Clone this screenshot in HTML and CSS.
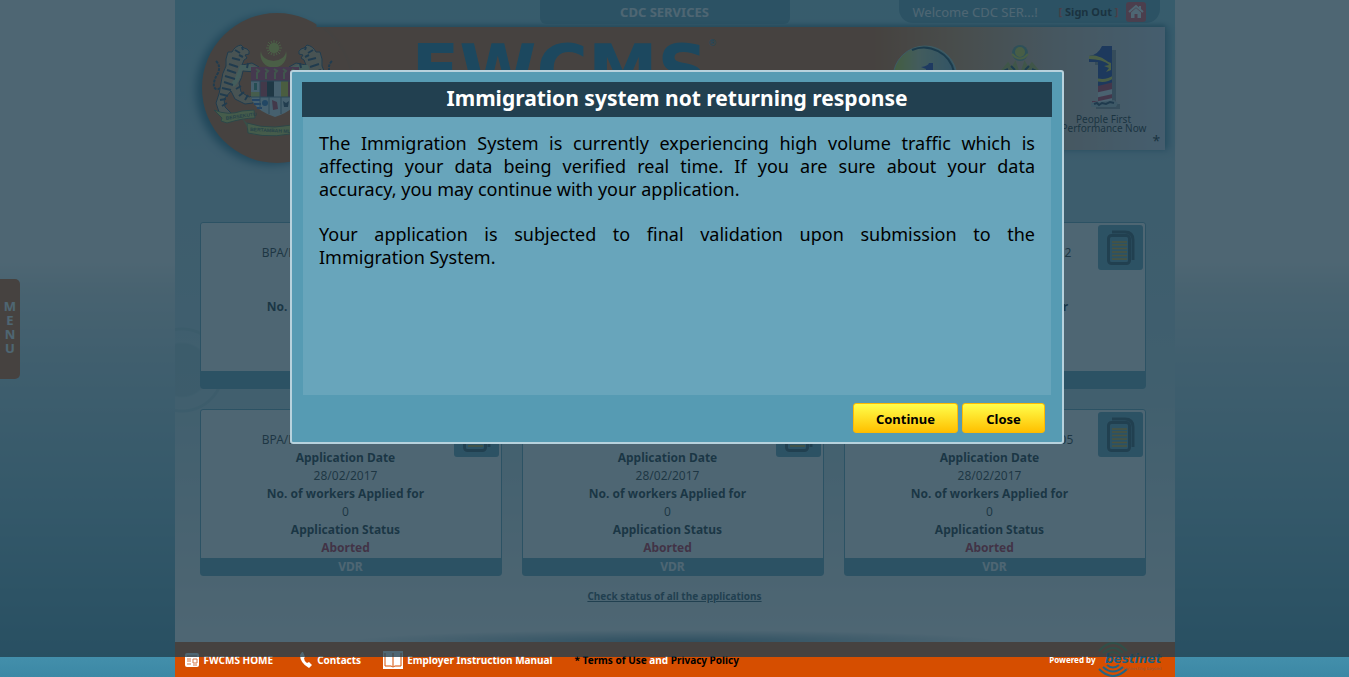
FILE: index.html
```
<!DOCTYPE html>
<html lang="en">
<head>
<meta charset="utf-8">
<title>FWCMS - CDC Services</title>
<link rel="stylesheet" href="styles.css">
</head>
<body>
<svg class="defs" width="0" height="0" aria-hidden="true">
  <defs>
    <symbol id="docs" viewBox="0 0 45 45">
      <path d="M14 7h13q8 0 8 8v20" fill="none" stroke="#224050" stroke-width="3"/>
      <rect x="10.500" y="10.500" width="21" height="28" rx="3" fill="none" stroke="#224050" stroke-width="3"/>
      <path d="M14 17h15M14 20h15M14 23.500h15M14 27h15M14 30.500h15M14 34h15" stroke="#e8a000" stroke-width="1.500"/>
    </symbol>
    <symbol id="tiger" viewBox="0 0 50 76">
      <path d="M5 17q5 5 2 12q-5 8-4 14q3 5 8-1" fill="none" stroke="#1c2b45" stroke-width="2" stroke-dasharray="3 1"/>
      <path d="M21 8q3-6 9-7l3 3 3 1q3 2 2 5l-4 1 2 3-3 2-2 5 10-2 7 4-4 5-12-1q-1 7-4 12l2 9 8 5 7-2-3 8-8 1-10-5-4-8-7 8 1 8 6 6-1 4-10-2-4-12q4-10 5-20t5-17q-1-7 2-14z" fill="#e0a060" stroke="#1c2b45"/>
      <path d="M29 21l10 0 6 2-3 4-11-1q-2 11-8 17l-3-3q6-8 9-19z" fill="#c9d08c"/>
      <path d="M21 14l8 2M18 20l9 3M16 26l9 3M14 32l10 3M13 38l9 3M11 44l9 2M9 50l8 2M9 56l6-1M11 62l5-3M37 19l-1 5M25 45l5-3M28 52l5-4M34 56l3-5M24 6l5 3M31 3l1 3M28 11l4 2" stroke="#1c2b45" stroke-width="2"/>
    </symbol>
  </defs>
</svg>

<div class="page">
  <div class="topbar">
    <div class="service-name">CDC SERVICES</div>
    <div class="account">
      <span class="welcome">Welcome CDC SER...!</span>
      <span class="signout"><i>[</i> <a href="#">Sign Out</a> <i>]</i></span>
      <a class="home" href="#" aria-label="Home">
        <svg viewBox="0 0 20 20" width="20" height="20"><path d="M3 10l7-6 7 6M14 4v4" fill="none" stroke="#fff" stroke-width="2"/><path d="M5 10.500l5-4.500 5 4.500V16h-3.500v-4h-3v4H5z" fill="#fff"/></svg>
      </a>
    </div>
  </div>

  <header class="banner">
    <div class="crest">
      <svg viewBox="0 0 150 150" width="150" height="150" aria-hidden="true">
        <use href="#tiger" x="9" y="31" width="50" height="76"/>
        <g transform="translate(144 0) scale(-1 1)"><use href="#tiger" x="9" y="31" width="50" height="76"/></g>
        <path d="M59 38a13 13 0 1 0 25 0a12.500 10 0 0 1-25 0z" fill="#e8d820"/>
        <circle cx="72" cy="35" r="5" fill="#e8d820"/>
        <path d="M72 27v16M64 35h16M66 29l12 12M78 29l-12 12M69 28l6 14M75 28l-6 14M65 32l14 6M65 38l14-6" stroke="#e8d820"/>
        <path d="M49 54h48v14H49z" fill="#d31f4b"/>
        <path d="M54 56l3 2-2 2v6M63 56l3 2-2 2v6M72 56l3 2-2 2v6M81 56l3 2-2 2v6M90 56l3 2-2 2v6" fill="none" stroke="#b8b040" stroke-width="2"/>
        <path d="M49 68h48v13q0 15-24 23-24-8-24-23z" fill="#d5e0e4"/>
        <path d="M58 68h7v16h-7z" fill="#c51f36"/><path d="M65 68h7v16h-7z" fill="#16191d"/><path d="M79 68h7v16h-7z" fill="#ecd300"/><path d="M86 68h4v16h-4z" fill="#c51f36"/>
        <path d="M49 79h9v5h-9z" fill="#d8cf40"/><path d="M52 70h3v7h-3z" fill="#358262"/>
        <path d="M50 87h8M52 91h7M55 95h5" stroke="#2a58ba" stroke-width="2"/>
        <path d="M49 68h48M49 84h48M58 68v27M67 84v17M79 84v17" stroke="#526779"/>
        <circle cx="63" cy="90" r="3" fill="#2564b2"/><path d="M70 87l5 2 1 7-5 1z" fill="#c51f36"/><path d="M81 88l3 2 3-2-1 6h-4z" fill="#27344c"/>
        <path d="M12 97q14 6 28 1l12-1 1 8q-12 0-28 5l-6-2 1-3z" fill="#d2cc38" stroke="#59632b"/>
        <path d="M45 110q27 9 58-2v9q-29 10-57 3z" fill="#d2cc38" stroke="#59632b"/>
        <path d="M40 105l6 6v5z" fill="#8d8a28"/>
        <text class="motto" x="24" y="107" transform="rotate(-8 24 107)">BERSEKUTU</text>
        <text class="motto" x="48" y="118" transform="rotate(3 48 118)">BERTAMBAH MUTU</text>
      </svg>
    </div>
    <div class="brand">FWCMS<sup>®</sup></div>
    <div class="partners">
      <svg class="onecall" viewBox="0 0 66 66" width="66" height="66" aria-hidden="true">
        <defs><linearGradient id="disc"><stop offset="0" stop-color="#c8d600"/><stop offset=".4" stop-color="#c5cc90"/><stop offset="1" stop-color="#6fa4c0"/></linearGradient></defs>
        <circle cx="33" cy="35" r="32" fill="url(#disc)" stroke="#a8c8b8"/>
        <path d="M20 7a31 31 0 0 1 42 22" fill="none" stroke="#002a3c" stroke-width="2"/>
        <path d="M29 24q7-1 8-4h4v28h-7V26z" fill="#1227a5"/>
      </svg>
      <svg class="agency" viewBox="0 0 44 44" width="44" height="44" aria-hidden="true">
        <circle cx="22" cy="9" r="8" fill="#62907d"/><circle cx="22" cy="8" r="5" fill="#e0d820"/>
        <path d="M14 10q8 9 16 0" fill="none" stroke="#e0d820" stroke-width="2"/>
        <path d="M4 28l6-7 4 5 3-5 2 6M40 28l-6-7-4 5-3-5-2 6" fill="none" stroke="#b8b030" stroke-width="4"/>
        <path d="M6 27l4-2M13 22l4 4M38 27l-4-2M31 22l-4 4" stroke="#063148" stroke-width="2"/>
      </svg>
      <div class="people">
        <svg viewBox="0 0 36 66" width="36" height="66" aria-hidden="true">
          <defs><clipPath id="one"><path d="M3 13q9-1 13-10h10v55h4v5H6v-5h6V19H3z"/></clipPath></defs>
          <path d="M9 17q9-1 13-10h8v54h4v5H10v-5h6V22H9z" fill="#0d1625" opacity=".4"/>
          <g clip-path="url(#one)">
            <path d="M0 0h36v66H0z" fill="#0c1f90"/>
            <path d="M2 12q16 0 22 10-8-6-22-6z" fill="#e8d820"/>
            <path d="M8 34q10 5 20-2v3q-10 7-20 2z" fill="#e8d820"/>
            <path d="M0 46l36-9v29H0z" fill="#c81838"/><path d="M0 52l36-8v5L0 57zM0 61l36-8v3L5 64z" fill="#e8e8f0"/>
          </g>
          <path d="M25 15v5l-5-2 3 4-5 1 5 2-3 4 5-2v4z" fill="#e8d820"/>
          <path d="M5 60l23-3 4 3-2 4H5z" fill="#b0bcc3"/><path d="M8 61l3-1 2 2 3-2 4 1 4-2 4 1" fill="none" stroke="#172744" stroke-width="2"/>
        </svg>
        <p>People First<br>Performance Now</p>
      </div>
      <span class="star">*</span>
    </div>
  </header>

  <main class="cards">
    <article class="card"><div class="info"><p>BPA/BVP/280217/0000000102</p><b>Application Date</b><p>28/02/2017</p><b>No. of workers Applied for</b><p>0</p><b>Application Status</b><b class="bad">Aborted</b></div><button class="docs" aria-label="Documents"><svg width="45" height="45"><use href="#docs"/></svg></button><div class="kind">VDR</div></article>
    <article class="card"><div class="info"><p>BPA/BVP/280217/0000000102</p><b>Application Date</b><p>28/02/2017</p><b>No. of workers Applied for</b><p>0</p><b>Application Status</b><b class="bad">Aborted</b></div><button class="docs" aria-label="Documents"><svg width="45" height="45"><use href="#docs"/></svg></button><div class="kind">VDR</div></article>
    <article class="card"><div class="info"><p>BPA/BVP/280217/00000001 2</p><b>Application Date</b><p>28/02/2017</p><b>No. of workers Applied for</b><p>0</p><b>Application Status</b><b class="bad">Aborted</b></div><button class="docs" aria-label="Documents"><svg width="45" height="45"><use href="#docs"/></svg></button><div class="kind">VDR</div></article>
    <article class="card"><div class="info"><p>BPA/BVP/280217/0000000105</p><b>Application Date</b><p>28/02/2017</p><b>No. of workers Applied for</b><p>0</p><b>Application Status</b><b class="bad">Aborted</b></div><button class="docs" aria-label="Documents"><svg width="45" height="45"><use href="#docs"/></svg></button><div class="kind">VDR</div></article>
    <article class="card"><div class="info"><p>BPA/BVP/280217/0000000105</p><b>Application Date</b><p>28/02/2017</p><b>No. of workers Applied for</b><p>0</p><b>Application Status</b><b class="bad">Aborted</b></div><button class="docs" aria-label="Documents"><svg width="45" height="45"><use href="#docs"/></svg></button><div class="kind">VDR</div></article>
    <article class="card"><div class="info"><p>BPA/BVP/280217/0000000105</p><b>Application Date</b><p>28/02/2017</p><b>No. of workers Applied for</b><p>0</p><b>Application Status</b><b class="bad">Aborted</b></div><button class="docs" aria-label="Documents"><svg width="45" height="45"><use href="#docs"/></svg></button><div class="kind">VDR</div></article>
  </main>
  <a class="all" href="#">Check status of all the applications</a>

  <footer class="footer">
    <a class="f-home" href="#"><svg width="16" height="16" viewBox="0 0 16 16"><rect x="1" y="1" width="14" height="14" rx="2" fill="#fff"/><path d="M3 4h10M3 7h4M3 9h4M9 7h4v4H9zM3 12h4M9 13h4" fill="none" stroke="#d67b4a"/></svg>FWCMS HOME</a>
    <a class="f-contact" href="#"><svg width="14" height="18" viewBox="0 0 14 18"><path d="M3 1L1 4q0 8 9 13l3-3-3-3-2 1q-3-2-3-5l1-1-2-5z" fill="#fff"/></svg>Contacts</a>
    <a class="f-manual" href="#"><svg width="20" height="19" viewBox="0 0 20 19"><path d="M0 1h20v18H0z" fill="#fff"/><path d="M10 3v13M2 3v13h6l2 1 2-1h6V3" fill="none" stroke="#d64e00"/></svg>Employer Instruction Manual</a>
    <div class="legal">* <a href="#">Terms of Use</a> <span>and</span> <a href="#">Privacy Policy</a></div>
    <div class="powered">Powered by
      <svg width="68" height="35" viewBox="0 0 68 35" role="img" aria-label="bestinet">
        <g fill="none" stroke-width="2"><path d="M1 9q14-16 28 0M5 11q10-10 20 0M9 13q6-6 12 0" stroke="#6a8b2b"/><path d="M1 27q14 14 28 0M5 25q10 9 20 0M9 23q6 5 12 0" stroke="#216584"/></g>
        <text class="bestinet" x="7" y="21">bestinet</text>
        <text class="tagline" x="25" y="28">connecting beyond</text>
      </svg>
    </div>
  </footer>
</div>

<button class="menu-tab"><span>M</span><span>E</span><span>N</span><span>U</span></button>
<div class="overlay"></div>

<div class="modal-layer">
  <section class="modal" role="dialog" aria-modal="true" aria-labelledby="dlg-title">
    <h2 id="dlg-title">Immigration system not returning response</h2>
    <div class="message">
      <p>The Immigration System is currently experiencing high volume traffic which is affecting your data being verified real time. If you are sure about your data accuracy,&nbsp;you may continue with your application.</p>
      <p>Your application is subjected to final validation upon submission to the Immigration&nbsp;System.</p>
    </div>
    <div class="actions"><button>Continue</button><button>Close</button></div>
  </section>
</div>
</body>
</html>
```
FILE: styles.css
```
* { box-sizing: border-box; }
body {
  margin: 0;
  min-height: 100vh;
  overflow: hidden;
  font-family: "Noto Sans", "Open Sans", sans-serif;
  font-size: 12px;
  color: #000;
  background: linear-gradient(#fff 0, #fff 260px, #e0edf0 290px, #b5d8e5 365px, #7cb9cd 510px, #438fab 657px, #3c88a5 677px);
}
p, h2 { margin: 0; }
button { font-family: inherit; border: 0; padding: 0; cursor: pointer; }
.defs { display: block; }

.page {
  display: flex;
  flex-direction: column;
  max-width: 1000px;
  min-height: 100vh;
  margin: 0 auto;
  background:
    radial-gradient(circle at 7px 370px, rgba(90, 150, 165, .2) 26px, transparent 28px, transparent 39px, rgba(90, 150, 165, .2) 40px, rgba(90, 150, 165, .2) 42px, transparent 43px),
    radial-gradient(ellipse 330px 12px at 500px 642px, #5f8fa2, transparent),
    linear-gradient(#8acddd 0, #a8cfdf 150px, #aed4e2 260px, #bddce5 400px, #f0f5f6 580px, #fff 640px);
}

.topbar { display: flex; height: 24px; padding-right: 15px; }
.service-name {
  width: 250px;
  margin-left: auto;
  margin-right: 109px;
  border-radius: 0 0 6px 6px;
  background: #569bb3;
  color: #fff;
  font-size: 13px;
  font-weight: 700;
  line-height: 24px;
  text-align: center;
}
.account {
  display: flex;
  align-items: center;
  width: 261px;
  height: 23px;
  padding: 0 14px;
  border-radius: 0 0 14px 14px;
  background: #569bb3;
}
.welcome { color: #fff; font-size: 13px; }
.signout { margin-left: auto; margin-right: 7px; font-weight: 700; font-size: 11px; }
.signout a { color: #000; text-decoration: none; }
.signout i { color: #e53a20; font-style: normal; }
.home { display: flex; border-radius: 3px; background: #f03a40; }

.banner {
  position: relative;
  display: flex;
  height: 123px;
  margin: 3px 10px 0 100px;
  background: linear-gradient(90deg, #d64e00 0, #d64e00 600px, #e0813c 680px, #d7b3a0 780px, #cfd4e6 100%);
  box-shadow: 0 -2px 4px #367d91, 4px 0 8px #4b8ca8;
}
.crest {
  position: absolute;
  left: -73px;
  top: -14px;
  width: 150px;
  height: 150px;
  border-radius: 50%;
  background: #d64e00;
  box-shadow: -6px 2px 8px #1f6582;
  clip-path: polygon(-20px -20px, 115px -20px, 115px 14px, 170px 14px, 170px 170px, -20px 170px);
}
.motto { font: 700 5px "Liberation Sans", sans-serif; fill: #3f4d31; }
.brand {
  padding: 8px 0 0 137px;
  color: #05699b;
  font: 700 70px/1 "DejaVu Sans", sans-serif;
}
.brand sup { font-size: 9px; vertical-align: 48px; font-weight: 400; }
.partners { display: flex; margin-left: auto; padding: 16px 3px 0 0; }
.agency { margin: 1px 20px 0 40px; }
.people { width: 84px; margin-right: 7px; text-align: center; }
.people p { font-size: 10px; line-height: 9px; white-space: nowrap; margin-top: 2px; }
.star { align-self: flex-end; font-size: 14px; width: 9px; }

.cards {
  display: grid;
  grid-template-columns: repeat(3, 1fr);
  gap: 20px;
  padding: 72px 29px 0 25px;
}
.card {
  position: relative;
  border: 1px solid #569bb3;
  border-radius: 3px;
  background: #fff;
  text-align: center;
}
.info { padding: 21px 10px 1px 0; line-height: 18px; color: #111; }
.info b { display: block; color: #001018; }
.info .bad { color: #c00020; }
.docs { position: absolute; top: 2px; right: 2px; border-radius: 3px; background: #569bb3; }
.docs svg { display: block; }
.kind { height: 17px; background: #569bb3; color: #fff; font-size: 12px; font-weight: 700; line-height: 17px; }
.all { margin: 13px auto 0; color: #224050; font-size: 10px; line-height: 14px; font-weight: 700; }

.footer {
  display: flex;
  align-items: center;
  height: 35px;
  margin-top: auto;
  padding: 0 9px;
  background: #d64e00;
  font-size: 10px;
  font-weight: 700;
  white-space: nowrap;
}
.footer > a { display: flex; align-items: center; gap: 4px; color: #fff; text-decoration: none; }
.f-contact { margin-left: 26px; }
.f-manual { margin-left: 22px; }
.legal { margin-left: 22px; }
.legal a { color: #000; text-decoration: none; }
.legal span { color: #fff; }
.powered { display: flex; align-items: center; gap: 2px; margin-left: auto; color: #fff; font-size: 8px; }
.bestinet { font: italic 700 12px "DejaVu Sans", sans-serif; fill: #165f83; }
.tagline { font: 4px "DejaVu Sans", sans-serif; fill: #8b5a45; }

.menu-tab {
  position: fixed;
  left: 0;
  top: 279px;
  display: flex;
  flex-direction: column;
  align-items: center;
  justify-content: center;
  width: 20px;
  height: 100px;
  padding-bottom: 4px;
  border-radius: 0 5px 5px 0;
  background: #d64e00;
  color: #fff;
  font-size: 13px;
  font-weight: 700;
  line-height: 14px;
}
.overlay { position: fixed; inset: 0 0 20px; background: rgba(34, 64, 80, .8); }

.modal-layer { position: fixed; inset: 0; display: flex; justify-content: center; align-items: flex-start; padding: 70px 0 0 5px; }
.modal {
  width: 774px;
  padding: 10px;
  border: 2px solid #b7d2dd;
  border-radius: 3px;
  background: #569bb3;
}
.modal h2 {
  background: #224050;
  color: #fff;
  font-size: 21px;
  line-height: 33px;
  padding-bottom: 2px;
  text-align: center;
}
.message {
  min-height: 278px;
  margin: 0 1px;
  padding: 15px 16px;
  background: #68a5bb;
  font-size: 18px;
  line-height: 23px;
  text-align: justify;
}
.message p + p { margin-top: 22px; }
.actions { display: flex; justify-content: flex-end; gap: 4px; padding: 8px 7px 0 0; margin-bottom: -1px; }
.actions button {
  height: 30px;
  padding: 2px 22px 0;
  min-width: 83px;
  border: 1px solid #ffba00;
  border-radius: 3px;
  background: linear-gradient(#ffff4c, #ffc000);
  color: #000;
  font-size: 13px;
  font-weight: 700;
}
```
